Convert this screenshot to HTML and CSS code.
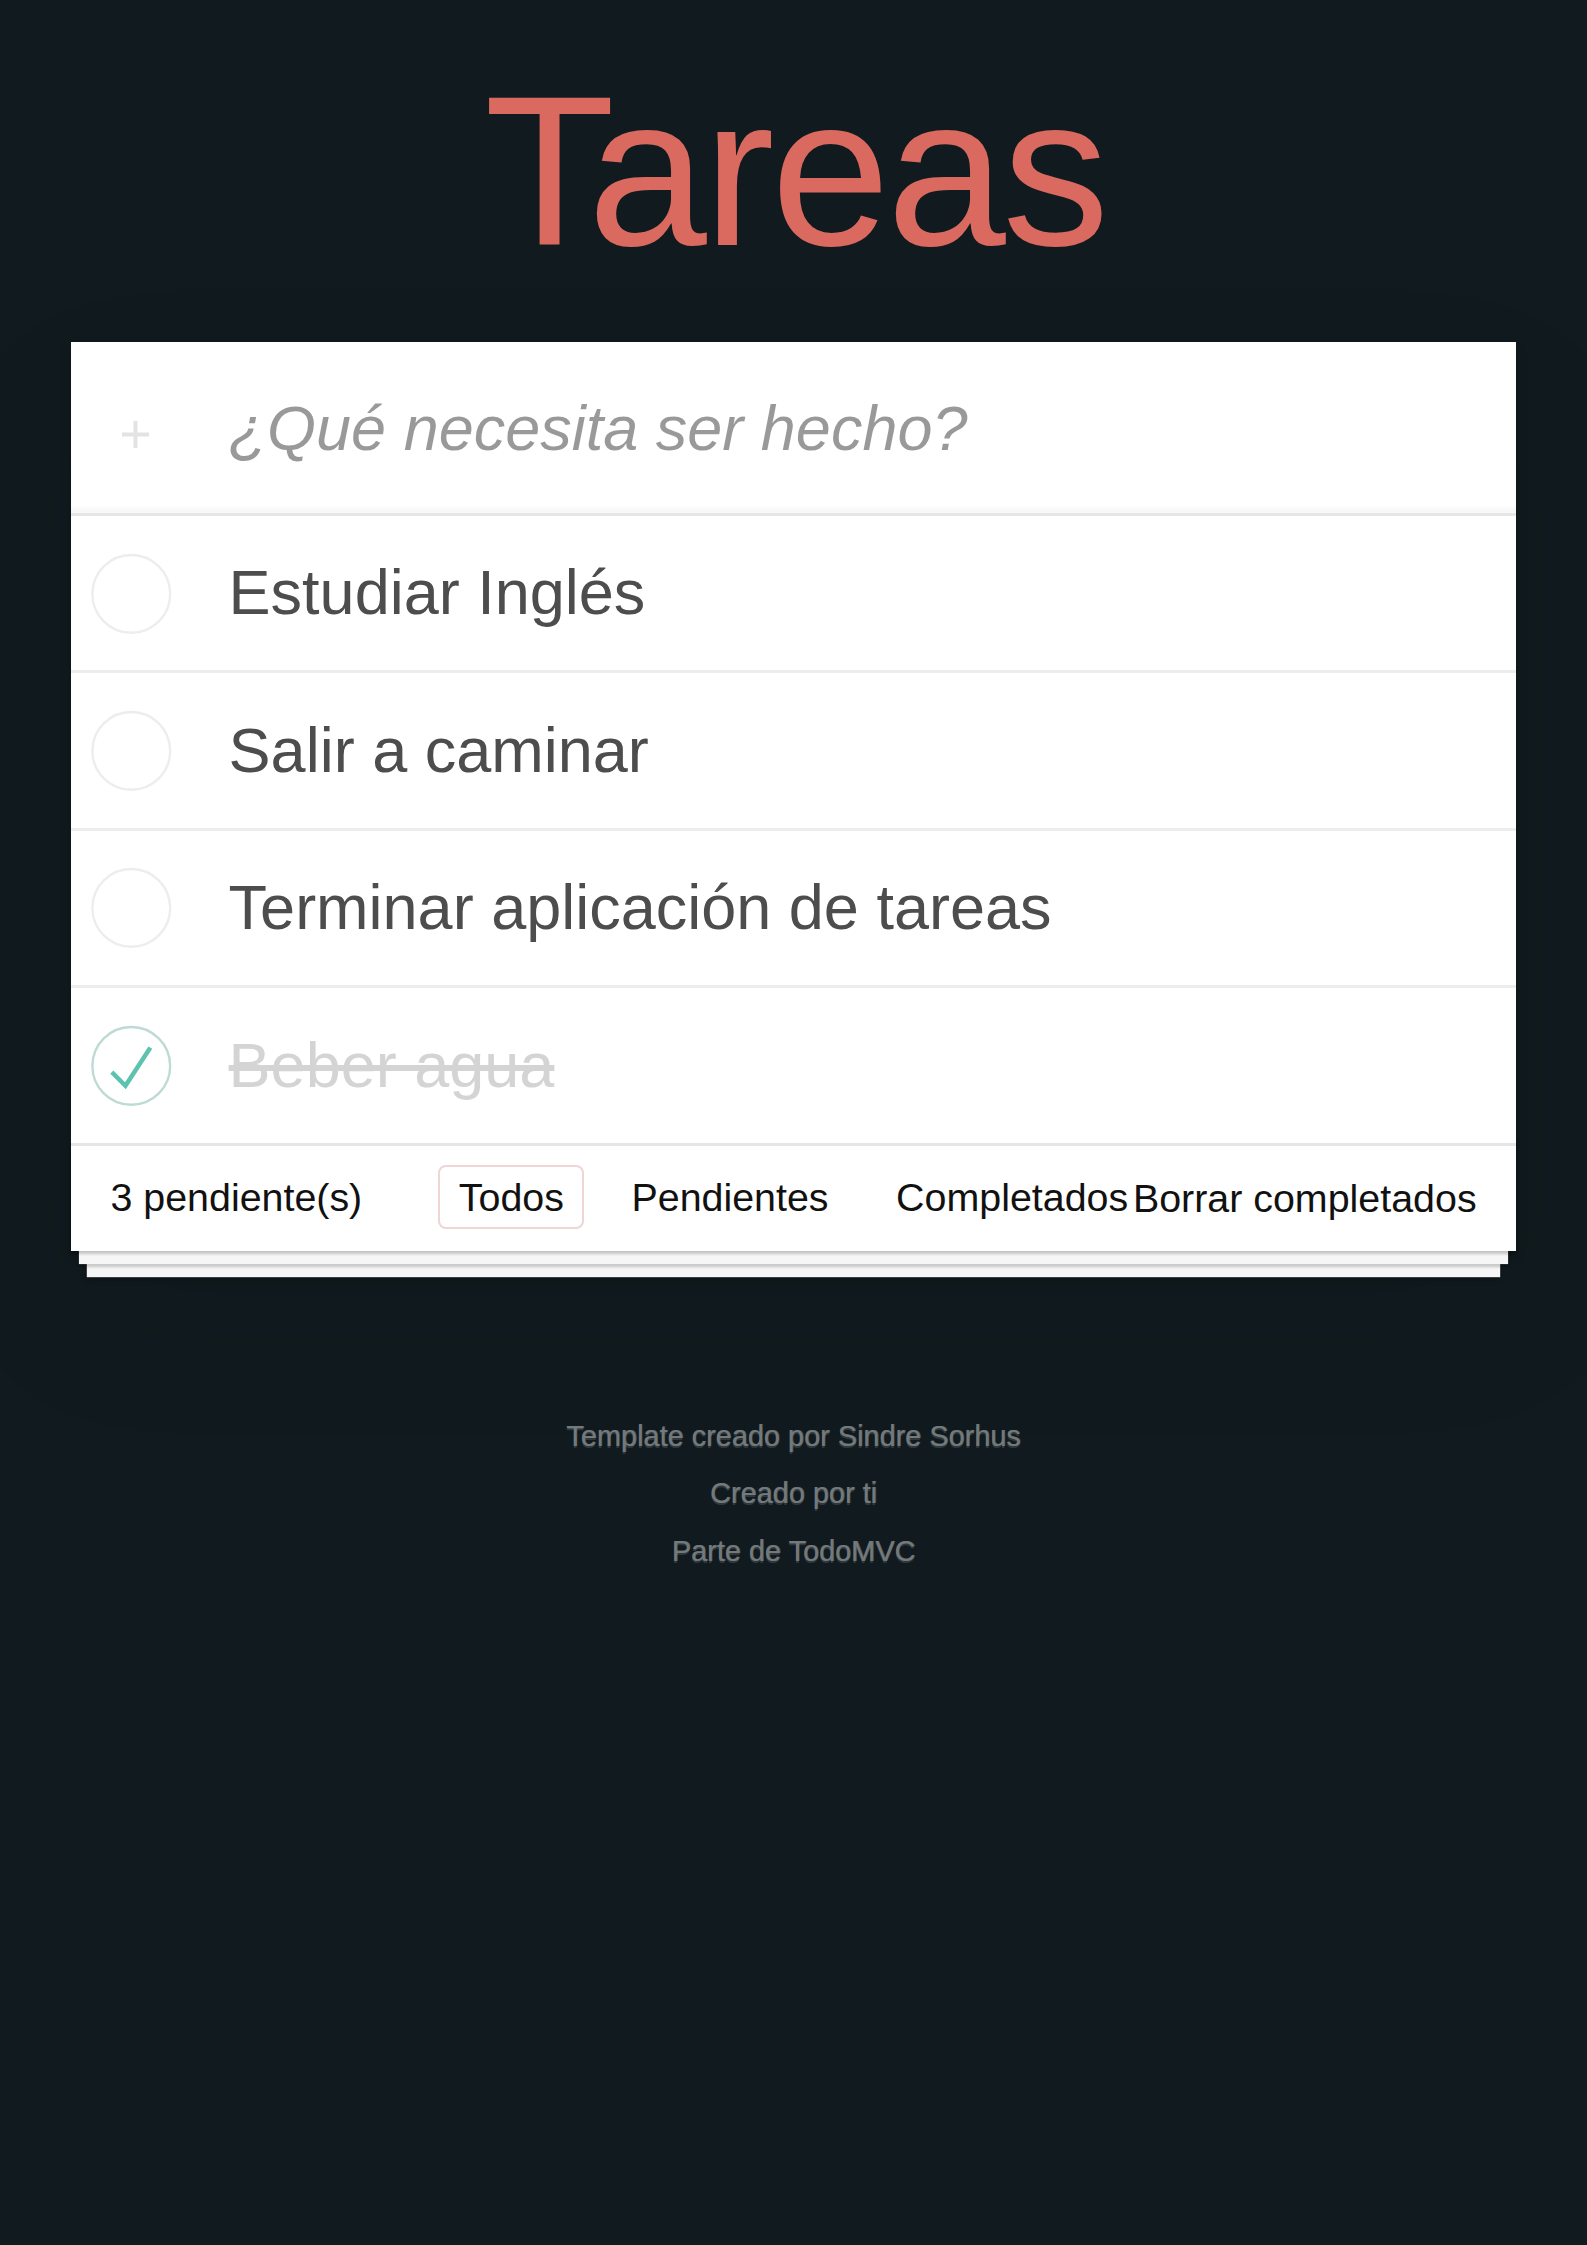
FILE: index.html
```html
<!DOCTYPE html>
<html lang="es">
<head>
<meta charset="utf-8">
<title>Tareas</title>
<link rel="stylesheet" href="styles.css">
</head>
<body>
<h1 class="title">Tareas</h1>
<section class="todoapp">
  <header class="header">
    <span class="add-icon" aria-hidden="true">
      <svg viewBox="0 0 27 27"><rect x="0" y="11.5" width="27" height="4" fill="#e3e3e3"/><rect x="11.5" y="0" width="4" height="27" fill="#e3e3e3"/></svg>
    </span>
    <input class="new-todo" placeholder="¿Qué necesita ser hecho?">
  </header>
  <ul class="todo-list">
    <li class="todo">
      <svg class="toggle" viewBox="-10 -18 100 135" aria-hidden="true"><circle cx="50" cy="50" r="50" fill="none" stroke="#ededed" stroke-width="3"/></svg>
      <span class="todo-label">Estudiar Inglés</span>
    </li>
    <li class="todo">
      <svg class="toggle" viewBox="-10 -18 100 135" aria-hidden="true"><circle cx="50" cy="50" r="50" fill="none" stroke="#ededed" stroke-width="3"/></svg>
      <span class="todo-label">Salir a caminar</span>
    </li>
    <li class="todo">
      <svg class="toggle" viewBox="-10 -18 100 135" aria-hidden="true"><circle cx="50" cy="50" r="50" fill="none" stroke="#ededed" stroke-width="3"/></svg>
      <span class="todo-label">Terminar aplicación de tareas</span>
    </li>
    <li class="todo completed">
      <svg class="toggle" viewBox="-10 -18 100 135" aria-hidden="true"><circle cx="50" cy="50" r="50" fill="none" stroke="#bddad5" stroke-width="3"/><path fill="#5dc2af" d="M72 25L42 71 27 56l-4 4 20 20 34-52z"/></svg>
      <span class="todo-label">Beber agua</span>
    </li>
  </ul>
  <footer class="footer">
    <span class="todo-count"><strong>3</strong> pendiente(s)</span>
    <ul class="filters">
      <li><a class="selected" href="#/">Todos</a></li>
      <li><a href="#/active">Pendientes</a></li>
      <li><a href="#/completed">Completados</a></li>
    </ul>
    <button class="clear-completed" type="button">Borrar completados</button>
  </footer>
</section>
<footer class="info">
  <p>Template creado por <a href="#">Sindre Sorhus</a></p>
  <p>Creado por <a href="#">ti</a></p>
  <p>Parte de <a href="#">TodoMVC</a></p>
</footer>
</body>
</html>
```

FILE: styles.css
```css
html {
  background: #111b1f;
}

body {
  margin: 0;
  font-family: "Liberation Sans", Arial, Helvetica, sans-serif;
  font-size: 36.8px;
  line-height: 51.5px;
  color: #111;
  background: #111b1f;
}

.title {
  margin: 64px 0 0;
  padding-left: 3px;
  font-size: 214px;
  line-height: 214px;
  font-weight: 400;
  letter-spacing: -3.5px;
  text-align: center;
  color: #da6a5f;
}

.todoapp {
  width: 1445px;
  margin: 64px auto 0;
  background: #fff;
  box-shadow: 0 5.3px 10.5px 0 rgba(0, 0, 0, 0.2), 0 65.7px 131.4px 0 rgba(0, 0, 0, 0.1);
}

.header {
  display: flex;
  align-items: center;
  height: 171px;
  box-shadow: inset 0 -5.3px 2.6px rgba(0, 0, 0, 0.03);
}

.add-icon {
  flex: none;
  display: flex;
  width: 157.6px;
  box-sizing: border-box;
  padding-left: 51px;
  padding-top: 14px;
}

.add-icon svg {
  display: block;
  width: 27px;
  height: 27px;
}

.new-todo {
  flex: 1;
  min-width: 0;
  height: 100%;
  margin: 0;
  padding: 0 42px 0 0;
  border: 0;
  outline: none;
  background: transparent;
  font-family: "Liberation Sans", Arial, Helvetica, sans-serif;
  font-size: 63px;
  font-weight: 400;
  line-height: 88.3px;
  color: #4d4d4d;
}

.new-todo::placeholder {
  font-style: italic;
  font-weight: 400;
  color: rgba(0, 0, 0, 0.4);
}

.todo-list {
  margin: 0;
  padding: 0;
  list-style: none;
  border-top: 3px solid #e6e6e6;
}

.todo {
  display: flex;
  align-items: center;
  border-bottom: 3px solid #ededed;
  font-size: 63px;
}

.todo:last-child {
  border-bottom: none;
}

.toggle {
  flex: none;
  display: block;
  width: 105px;
  height: 105px;
}

.todo-label {
  flex: 1;
  margin-left: 52.6px;
  padding: 39.4px 39.4px 39.4px 0;
  line-height: 75.6px;
  color: #4d4d4d;
  word-break: break-all;
}

.todo.completed .todo-label {
  color: #d4d4d4;
  text-decoration: line-through;
}

.footer {
  display: grid;
  align-items: center;
  height: 52.5px;
  padding: 26.3px 39.4px;
  border-top: 3px solid #e6e6e6;
  font-size: 39.4px;
  line-height: 51.5px;
  color: #111;
  box-shadow:
    0 2.6px 2.6px rgba(0, 0, 0, 0.2),
    0 21px 0 -7.9px #f6f6f6,
    0 23.6px 2.6px -7.9px rgba(0, 0, 0, 0.2),
    0 42px 0 -15.8px #f6f6f6,
    0 44.7px 5.3px -15.8px rgba(0, 0, 0, 0.2);
}

.footer > * {
  grid-area: 1 / 1;
}

.todo-count {
  justify-self: start;
}

.todo-count strong {
  font-weight: 400;
}

.filters {
  justify-self: center;
  margin: 0;
  padding: 0;
  list-style: none;
}

.filters li {
  display: inline;
}

.filters a {
  color: inherit;
  margin: 7.9px;
  padding: 7.9px 18.4px;
  text-decoration: none;
  border: 2.6px solid transparent;
  border-radius: 7.9px;
}

.filters a.selected {
  border-color: rgba(175, 47, 47, 0.2);
}

.clear-completed {
  justify-self: end;
  margin: 0;
  padding: 0;
  border: 0;
  background: none;
  font-family: inherit;
  font-size: 100%;
  font-weight: 400;
  line-height: 52.5px;
  color: inherit;
  cursor: pointer;
  -webkit-appearance: none;
  appearance: none;
}

.info {
  margin: 171px auto 0;
  font-size: 28.9px;
  text-align: center;
  color: #74797b;
  text-shadow: 0 1.5px 0 rgba(255, 255, 255, 0.14), 0.8px 0 0 rgba(120, 125, 127, 0.6);
}

.info p {
  margin: 28.9px 0;
  line-height: 1;
}

.info a {
  color: inherit;
  text-decoration: none;
  font-weight: 400;
}
```
